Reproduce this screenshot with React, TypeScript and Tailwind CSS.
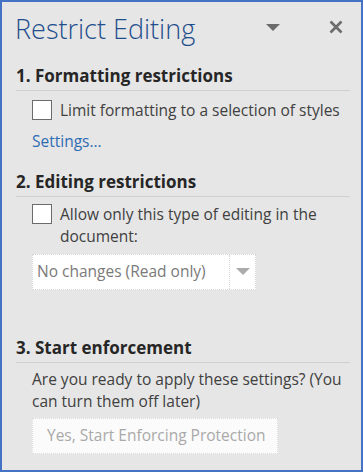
import React from 'react';

// Panel "Restrict Editing" iz Word-a
const Checkbox: React.FC = () => (
    <span className="mt-[1px] block h-[20px] w-[20px] shrink-0 border border-[#6b6b6b] bg-white" />
);

const SectionTitle: React.FC<{ children: React.ReactNode }> = ({ children }) => (
    <div className="mr-[11px] border-b border-[#d0d0d0] pb-[3px] text-[17px] font-bold leading-[22px] text-[#262626]">
        {children}
    </div>
);

const App: React.FC = () => {
    return (
        <div className="h-[472px] w-[363px] overflow-hidden border-2 border-[#4472c4] bg-[#e6e6e6] font-['Open_Sans',sans-serif]">
            {/* Zaglavlje */}
            <div className="flex h-[63px] items-start pl-[13px] pt-[10px]">
                <h1 className="flex-1 text-[27px] font-light leading-[34px] text-[#1f4e8c]">Restrict Editing</h1>
                <svg width="14" height="8" viewBox="0 0 14 8" className="mr-[49px] mt-[12px]">
                    <path d="M0 0 H14 L7 7 Z" fill="#6b6b6b" />
                </svg>
                <svg width="14" height="14" viewBox="0 0 14 14" className="mr-[18px] mt-[8px]">
                    <path d="M1.5 1.5 L12.5 12.5 M12.5 1.5 L1.5 12.5" stroke="#6b6b6b" strokeWidth="2.6" />
                </svg>
            </div>

            <div className="pl-[14px]">
                {/* 1 */}
                <SectionTitle>1. Formatting restrictions</SectionTitle>
                <div className="mt-[8px] flex gap-[8px] pl-[16px] text-[15.5px] leading-[22px] text-[#404040]">
                    <Checkbox />
                    <span>Limit formatting to a selection of styles</span>
                </div>
                <div className="mt-[9px] pl-[16px] text-[15.5px] leading-[22px] text-[#2e6cb3]">Settings...</div>

                {/* 2 */}
                <div className="mt-[19px]">
                    <SectionTitle>2. Editing restrictions</SectionTitle>
                </div>
                <div className="mt-[6px] flex gap-[8px] pl-[16px] text-[15.5px] leading-[22px] text-[#404040]">
                    <Checkbox />
                    <span className="pr-[20px]">Allow only this type of editing in the document:</span>
                </div>
                <div className="ml-[16px] mt-[7px] flex h-[36px] w-[224px] border border-dotted border-[#d6d6d6] bg-white">
                    <div className="flex flex-1 items-center pl-[4px] text-[15.5px] text-[#7a7a7a]">No changes (Read only)</div>
                    <div className="flex w-[26px] items-center justify-center border-l border-dotted border-[#d6d6d6]">
                        <svg width="14" height="8" viewBox="0 0 14 8">
                            <path d="M0 0 H14 L7 7 Z" fill="#ababab" />
                        </svg>
                    </div>
                </div>

                {/* 3 */}
                <div className="mt-[47px]">
                    <SectionTitle>3. Start enforcement</SectionTitle>
                </div>
                <div className="mt-[5px] pl-[16px] pr-[16px] text-[15.5px] leading-[22px] text-[#404040]">
                    Are you ready to apply these settings? (You can turn them off later)
                </div>
                <div className="ml-[16px] mt-[6px] flex h-[36px] w-[246px] items-center border border-dotted border-[#dcdcdc] bg-[#fbfbfb] pl-[14px] text-[15.5px] text-[#a9a9a9]">
                    Yes, Start Enforcing Protection
                </div>
            </div>
        </div>
    );
};

export default App;
